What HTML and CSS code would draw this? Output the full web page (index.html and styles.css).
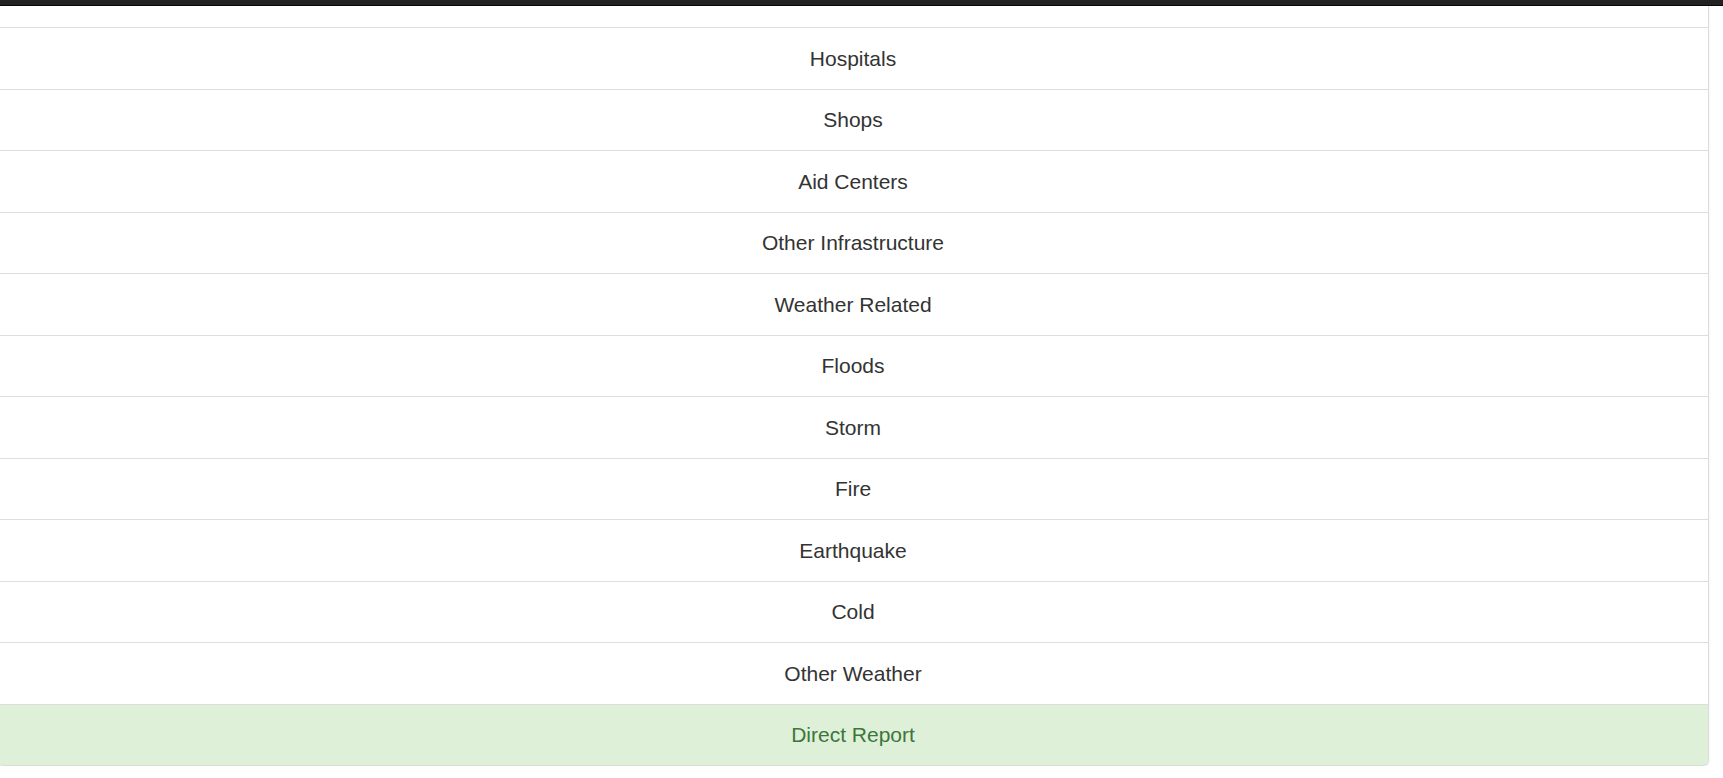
FILE: index.html
```html
<!DOCTYPE html>
<html>
<head>
<meta charset="utf-8">
<link rel="stylesheet" href="styles.css">
</head>
<body>
<div class="topbar"></div>
<div class="list">
  <div class="item cut"></div>
  <div class="item">Hospitals</div>
  <div class="item">Shops</div>
  <div class="item">Aid Centers</div>
  <div class="item">Other Infrastructure</div>
  <div class="item">Weather Related</div>
  <div class="item">Floods</div>
  <div class="item">Storm</div>
  <div class="item">Fire</div>
  <div class="item">Earthquake</div>
  <div class="item">Cold</div>
  <div class="item">Other Weather</div>
  <div class="item success">Direct Report</div>
</div>
</body>
</html>
```

FILE: styles.css
```css
html, body {
  margin: 0;
  padding: 0;
  background: #fff;
  overflow: hidden;
}
body {
  font-family: "Liberation Sans", Arial, sans-serif;
  font-size: 21px;
  color: #333;
}
.topbar {
  height: 5px;
  background: #222;
  border-bottom: 1px solid #080808;
}
.list {
  margin-left: -3px;
  width: 1710px;
  border-right: 1px solid #ddd;
  border-left: 1px solid #ddd;
  border-radius: 0 0 6px 6px;
  box-shadow: 0 1.5px 3px rgba(0, 0, 0, 0.08);
}
.item {
  padding: 15.75px 22px 14.75px;
  line-height: 30px;
  text-align: center;
  border-bottom: 1px solid #ddd;
}
.item.cut {
  padding: 0;
  height: 21px;
}
.item.success {
  background: #dff0d8;
  color: #3c763d;
  border-bottom: 1px solid #d6e0d0;
  border-radius: 0 0 6px 6px;
}
```
